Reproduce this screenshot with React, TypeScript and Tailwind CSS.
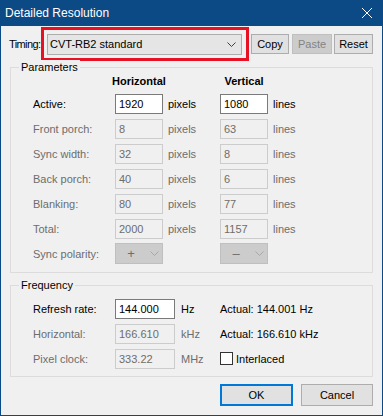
import React from "react";

type FieldProps = { value: string; enabled?: boolean; wide?: boolean };

const Field = ({ value, enabled = false, wide = false }: FieldProps) => (
	<div
		className={`${wide ? "w-[60px]" : "w-[48px]"} h-[20px] flex items-center pl-[3px] border ${
			enabled
				? "border-[#7a7a7a] bg-white text-black"
				: "border-[#cccccc] bg-[#f0f0f0] text-[#6d6d6d]"
		}`}
	>
		{value}
	</div>
);

const Chevron = ({ color }: { color: string }) => (
	<svg width="9" height="5" viewBox="0 0 9 5" className="shrink-0">
		<polyline points="0.5,0.5 4.5,4.5 8.5,0.5" fill="none" stroke={color} strokeWidth="1" />
	</svg>
);

const Polarity = ({ sign }: { sign: string }) => (
	<div className="w-[48px] h-[21px] bg-[#cccccc] border border-[#bfbfbf] flex items-center">
		<span className="w-[30px] text-center text-[13px] text-[#6d6d6d] leading-none">{sign}</span>
		<span className="ml-[4px] flex">
			<Chevron color="#a8a8a8" />
		</span>
	</div>
);

const GroupBox = ({ title, children, className }: { title: string; children: React.ReactNode; className: string }) => (
	<div className={`relative border border-[#dcdcdc] pl-[22px] ${className}`}>
		<span className="absolute left-[8px] top-[-8px] px-[2px] bg-[#f0f0f0] leading-[14px]">{title}</span>
		{children}
	</div>
);

const params = [
	{ label: "Active:", h: "1920", v: "1080", enabled: true },
	{ label: "Front porch:", h: "8", v: "63" },
	{ label: "Sync width:", h: "32", v: "8" },
	{ label: "Back porch:", h: "40", v: "6" },
	{ label: "Blanking:", h: "80", v: "77" },
	{ label: "Total:", h: "2000", v: "1157" },
];

const App = () => {
	return (
		<div className="w-[383px] h-[416px] bg-[#0c4a86] px-[1px] pb-[1px] flex flex-col font-['Liberation_Sans',Arial,sans-serif] text-[11px] leading-[14px] text-black">
			{/* title bar */}
			<div className="h-[26px] shrink-0 flex items-center justify-between pl-[4px] pr-[10px]">
				<span className="text-white text-[12px]">Detailed Resolution</span>
				<svg width="10" height="10" viewBox="0 0 10 10">
					<path d="M0 0L10 10M10 0L0 10" stroke="white" strokeWidth="1" />
				</svg>
			</div>

			<div className="flex-1 bg-[#f0f0f0] px-[9px] pt-[1px] flex flex-col">
				{/* timing row */}
				<div className="flex items-center h-[34px]">
					<span className="-ml-[1px] w-[32px] whitespace-nowrap tracking-[-0.6px]">Timing:</span>
					<div className="w-[208px] h-[34px] border-[3px] border-[#e81123] pl-[3px] pr-[4px] flex items-center">
						<div className="flex-1 h-[21px] bg-[#e5e5e5] border border-[#adadad] flex items-center justify-between pl-[2px] pr-[5px]">
							<span>CVT-RB2 standard</span>
							<Chevron color="#404040" />
						</div>
					</div>
					<div className="ml-[2px] w-[38px] h-[20px] bg-[#e1e1e1] border border-[#adadad] flex items-center justify-center">Copy</div>
					<div className="ml-[3px] w-[40px] h-[20px] bg-[#cccccc] border border-[#bfbfbf] text-[#838383] flex items-center justify-center">Paste</div>
					<div className="ml-[2px] w-[39px] h-[20px] bg-[#e1e1e1] border border-[#adadad] flex items-center justify-center">Reset</div>
				</div>

				{/* parameters */}
				<GroupBox title="Parameters" className="mt-[6px] pb-[6px]">
					<div className="h-[23px] pt-[6px] grid grid-cols-[82px_48px_57px_48px] font-bold">
						<span />
						<div className="w-[48px] flex justify-center whitespace-nowrap">Horizontal</div>
						<span />
						<div className="w-[48px] flex justify-center whitespace-nowrap">Vertical</div>
					</div>
					{params.map((p) => (
						<div key={p.label} className={`h-[25px] grid grid-cols-[82px_48px_57px_48px_auto] items-center ${p.enabled ? "" : "text-[#6d6d6d]"}`}>
							<span>{p.label}</span>
							<Field value={p.h} enabled={p.enabled} />
							<span className="pl-[5px]">pixels</span>
							<Field value={p.v} enabled={p.enabled} />
							<span className="pl-[5px]">lines</span>
						</div>
					))}
					<div className="h-[25px] grid grid-cols-[82px_48px_57px_48px] items-center text-[#6d6d6d]">
						<span>Sync polarity:</span>
						<Polarity sign="+" />
						<span />
						<Polarity sign="–" />
					</div>
				</GroupBox>

				{/* frequency */}
				<GroupBox title="Frequency" className="mt-[12px] pt-[10px] pb-[5px]">
					<div className="h-[25px] grid grid-cols-[82px_60px_45px_auto] items-center">
						<span>Refresh rate:</span>
						<Field value="144.000" enabled wide />
						<span className="pl-[6px]">Hz</span>
						<span>Actual: 144.001 Hz</span>
					</div>
					<div className="h-[25px] grid grid-cols-[82px_60px_45px_auto] items-center">
						<span className="text-[#6d6d6d]">Horizontal:</span>
						<Field value="166.610" wide />
						<span className="pl-[6px] text-[#6d6d6d]">kHz</span>
						<span>Actual: 166.610 kHz</span>
					</div>
					<div className="h-[25px] grid grid-cols-[82px_60px_45px_auto] items-center">
						<span className="text-[#6d6d6d]">Pixel clock:</span>
						<Field value="333.22" wide />
						<span className="pl-[6px] text-[#6d6d6d]">MHz</span>
						<label className="flex items-center">
							<span className="w-[13px] h-[13px] border border-[#333333] bg-white" />
							<span className="pl-[3px]">Interlaced</span>
						</label>
					</div>
				</GroupBox>

				{/* buttons */}
				<div className="mt-[7px] flex justify-end gap-[8px]">
					<div className="w-[73px] h-[22px] bg-[#e1e1e1] border-2 border-[#0078d7] flex items-center justify-center">OK</div>
					<div className="w-[72px] h-[22px] bg-[#e1e1e1] border border-[#adadad] flex items-center justify-center">Cancel</div>
				</div>
			</div>
		</div>
	);
};

export default App;
